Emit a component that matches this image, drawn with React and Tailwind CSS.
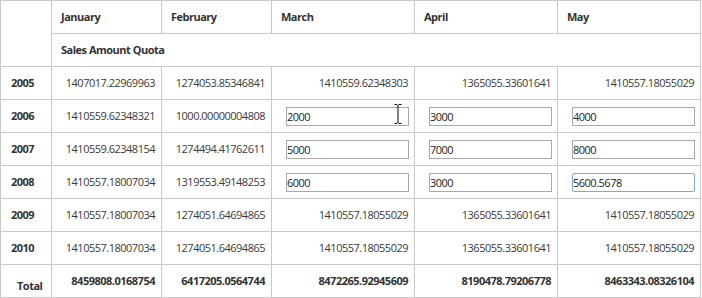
import { useState } from 'react';

const months = ['January', 'February', 'March', 'April', 'May'];

const rows = [
  { year: '2005', values: ['1407017.22969963', '1274053.85346841', '1410559.62348303', '1365055.33601641', '1410557.18055029'] },
  { year: '2006', values: ['1410559.62348321', '1000.00000004808', { edit: '2000', cursor: true }, { edit: '3000' }, { edit: '4000' }] },
  { year: '2007', values: ['1410559.62348154', '1274494.41762611', { edit: '5000' }, { edit: '7000' }, { edit: '8000' }] },
  { year: '2008', values: ['1410557.18007034', '1319553.49148253', { edit: '6000' }, { edit: '3000' }, { edit: '5600.5678', focus: true }] },
  { year: '2009', values: ['1410557.18007034', '1274051.64694865', '1410557.18055029', '1365055.33601641', '1410557.18055029'] },
  { year: '2010', values: ['1410557.18007034', '1274051.64694865', '1410557.18055029', '1365055.33601641', '1410557.18055029'] },
];

const totals = ['8459808.0168754', '6417205.0564744', '8472265.92945609', '8190478.79206778', '8463343.08326104'];

const cell = 'border border-[#c9c9c9] h-[33px] p-0 align-middle';

const IBeam = () => (
  <svg
    className="absolute left-[108px] top-[-3px] pointer-events-none"
    width="8"
    height="20"
    viewBox="0 0 8 20"
  >
    <path d="M0.5 0.5h2.5l1 1 1-1h2.5M4 1.5v17M0.5 19.5h2.5l1-1 1 1h2.5" fill="none" stroke="#000" strokeWidth="1" />
  </svg>
);

const EditCell = ({ value, focus, cursor }) => {
  const [text, setText] = useState(value);
  return (
    <div className="relative inline-block align-middle">
      <input
        value={text}
        onChange={(e) => setText(e.target.value)}
        className={`block w-[123px] h-[19px] px-0 text-[11px] tracking-[-0.5px] text-[#222] bg-white outline-none border ${
          focus ? 'border-[#7ea7e6] rounded-[2px]' : 'border-[#a9a9a9]'
        }`}
      />
      {cursor && <IBeam />}
    </div>
  );
};

export default function App() {
  return (
    <div className="bg-white w-[702px] h-[298px] font-['Open_Sans',sans-serif] text-[11px] tracking-[-0.5px] text-[#333]">
      <table className="table-fixed border-collapse w-[701px]">
        <colgroup>
          <col className="w-[51px]" />
          <col className="w-[110px]" />
          <col className="w-[110px]" />
          <col className="w-[143px]" />
          <col className="w-[143px]" />
          <col className="w-[143px]" />
        </colgroup>
        <thead>
          <tr>
            <th rowSpan={2} className={cell}></th>
            {months.map((m) => (
              <th key={m} className={`${cell} text-left font-bold pl-[9px]`}>
                {m}
              </th>
            ))}
          </tr>
          <tr>
            <th colSpan={5} className={`${cell} text-left font-bold pl-[9px]`}>
              Sales Amount Quota
            </th>
          </tr>
        </thead>
        <tbody>
          {rows.map((r) => (
            <tr key={r.year}>
              <td className={`${cell} font-bold pl-[10px] text-[#333]`}>{r.year}</td>
              {r.values.map((v, i) => (
                <td key={i} className={`${cell} text-right pr-[5px] text-[#3a3a3a]`}>
                  {typeof v === 'string' ? (
                    <span className="pr-px">{v}</span>
                  ) : (
                    <EditCell value={v.edit} focus={v.focus} cursor={v.cursor} />
                  )}
                </td>
              ))}
            </tr>
          ))}
          <tr>
            <td className={`${cell} font-bold pl-[16px] pt-[10px]`}>Total</td>
            {totals.map((t, i) => (
              <td key={i} className={`${cell} text-right pr-[6px] font-bold`}>
                {t}
              </td>
            ))}
          </tr>
        </tbody>
      </table>
    </div>
  );
}
